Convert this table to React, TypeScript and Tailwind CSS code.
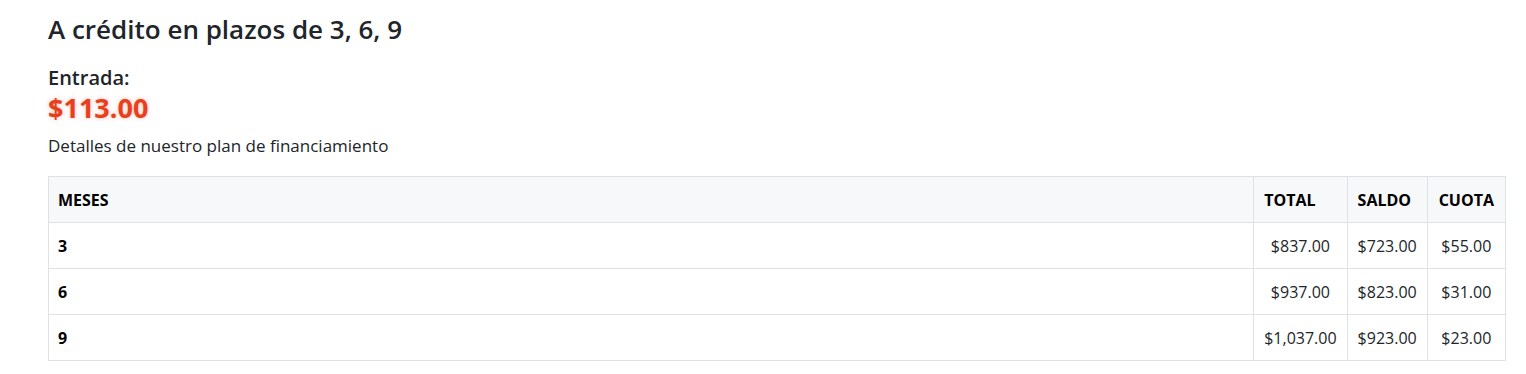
import React from "react";

const rows = [
  { meses: "3", total: "$837.00", saldo: "$723.00", cuota: "$55.00" },
  { meses: "6", total: "$937.00", saldo: "$823.00", cuota: "$31.00" },
  { meses: "9", total: "$1,037.00", saldo: "$923.00", cuota: "$23.00" },
];

export default function App() {
  return (
    <div className="min-h-screen bg-white pl-12 pr-5 pt-[11px] text-[#212529] font-['Open_Sans',sans-serif]">
      <h3 className="text-[26px] font-semibold leading-[36px]">A crédito en plazos de 3, 6, 9</h3>
      <h5 className="mt-[17px] text-[20px] font-semibold leading-[28px]">Entrada:</h5>
      <div className="text-[27px] font-bold leading-[32px] text-[#e8401c] [text-shadow:0_0_4px_rgba(232,64,28,0.35)]">
        $113.00
      </div>
      <p className="mt-[10px] text-[17px] leading-[24px]">Detalles de nuestro plan de financiamiento</p>
      <table className="mt-[18px] w-full border-collapse border border-[#dee2e6] text-[16px]">
        <thead>
          <tr className="bg-[#f7f8fa] h-[46px]">
            <th className="w-full border border-[#dee2e6] px-[9px] text-left font-bold text-black">MESES</th>
            <th className="whitespace-nowrap border border-[#dee2e6] px-[10px] text-left font-bold text-black">TOTAL</th>
            <th className="whitespace-nowrap border border-[#dee2e6] px-[10px] text-left font-bold text-black">SALDO</th>
            <th className="whitespace-nowrap border border-[#dee2e6] px-[11px] text-left font-bold text-black">CUOTA</th>
          </tr>
        </thead>
        <tbody>
          {rows.map((r) => (
            <tr key={r.meses} className="h-[46px]">
              <td className="border border-[#dee2e6] px-[9px] font-bold text-black">{r.meses}</td>
              <td className="whitespace-nowrap border border-[#dee2e6] px-[10px] text-center">{r.total}</td>
              <td className="whitespace-nowrap border border-[#dee2e6] px-[10px] text-center">{r.saldo}</td>
              <td className="whitespace-nowrap border border-[#dee2e6] px-[11px] text-center">{r.cuota}</td>
            </tr>
          ))}
        </tbody>
      </table>
    </div>
  );
}
